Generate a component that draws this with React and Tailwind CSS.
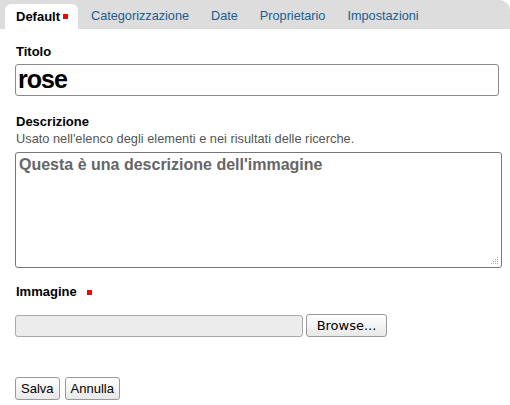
export default function App() {
  const tabs = ["Categorizzazione", "Date", "Proprietario", "Impostazioni"];
  return (
    <div className="w-[510px] h-[405px] bg-white font-['Liberation_Sans',Arial,sans-serif] text-[13px] text-black">
      {/* tab bar */}
      <div className="flex items-end h-[29px] bg-[#dddddd] rounded-tr-[10px] pl-[5px]">
        <div className="flex items-center h-[25px] w-[73px] bg-white rounded-t-[6px] pl-[11px] font-bold">
          Default
          <span className="ml-[3px] w-[5px] h-[5px] bg-[#ff0000] inline-block" />
        </div>
        <div className="flex items-center h-[25px] text-[12.7px] text-[#205c90]">
          {tabs.map((t, i) => (
            <span key={t} className={i === 0 ? "ml-[13px]" : "ml-[22px]"}>
              {t}
            </span>
          ))}
        </div>
      </div>

      <div className="pl-[15px] pr-[9px]">
        <div className="pt-[15px] pl-px font-bold leading-[15px]">Titolo</div>
        <div className="mt-[5px] h-[32px] w-[484px] border border-[#8a8a8a] rounded-[3px] flex items-center pl-[2px] font-bold text-[25px] tracking-[-1px]">
          rose
        </div>

        <div className="mt-[18px] pl-px font-bold leading-[15px]">Descrizione</div>
        <div className="mt-[3px] pl-px text-[12.8px] leading-[14px] text-[#555]">
          Usato nell'elenco degli elementi e nei risultati delle ricerche.
        </div>
        <div className="relative mt-[6px] h-[116px] w-[487px] border border-[#777] rounded-[3px] pl-[3px] pt-[3px] font-bold text-[16px] text-[#666] leading-[18px]">
          Questa è una descrizione dell'immagine
          <svg className="absolute right-[2px] bottom-[2px]" width="9" height="9" viewBox="0 0 9 9">
            {[[8, 2], [8, 4], [6, 4], [8, 6], [6, 6], [4, 6], [8, 8], [6, 8], [4, 8], [2, 8]].map(([x, y]) => (
              <rect key={`${x}-${y}`} x={x - 1} y={y - 1} width="1" height="1" fill="#aaa" />
            ))}
          </svg>
        </div>

        <div className="mt-[16px] pl-px flex items-center font-bold leading-[15px]">
          Immagine
          <span className="ml-[10px] mt-[2px] w-[5px] h-[5px] bg-[#ff0000] inline-block" />
        </div>
        <div className="mt-[15px] flex items-center gap-[3px]">
          <div className="h-[22px] w-[288px] bg-[#ececec] border border-[#aaa] rounded-[3px]" />
          <button className="h-[23px] w-[81px] border border-[#999] rounded-[3px] bg-gradient-to-b from-white to-[#e8e8e8] font-['DejaVu_Sans',sans-serif] text-[13px] text-black">
            Browse...
          </button>
        </div>

        <div className="mt-[40px] flex gap-[5px]">
          <button className="h-[23px] px-[5px] border border-[#999] rounded-[3px] bg-gradient-to-b from-white to-[#e8e8e8] text-[13px]">
            Salva
          </button>
          <button className="h-[23px] px-[5px] border border-[#999] rounded-[3px] bg-gradient-to-b from-white to-[#e8e8e8] text-[13px]">
            Annulla
          </button>
        </div>
      </div>
    </div>
  );
}
